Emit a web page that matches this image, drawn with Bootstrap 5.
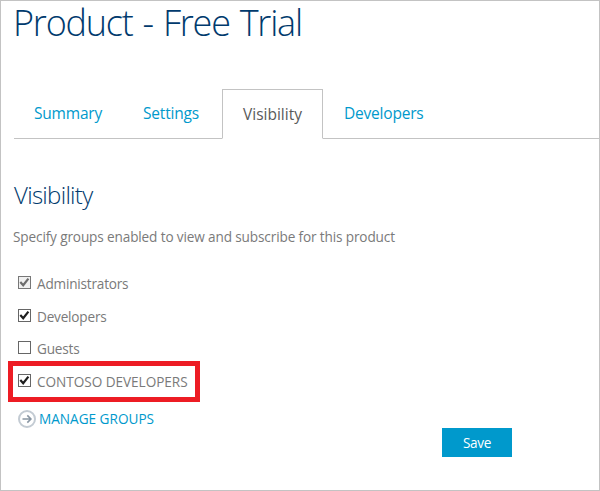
<!DOCTYPE html>
<html lang="en">
<head>
<meta charset="utf-8">
<meta name="viewport" content="width=device-width, initial-scale=1">
<title>Product - Free Trial</title>
<link href="https://cdn.jsdelivr.net/npm/bootstrap@5.3.0/dist/css/bootstrap.min.css" rel="stylesheet">
<style>
body{font-family:"Open Sans","Noto Sans",sans-serif;font-size:13.6px;color:#7a7a7a;background:#fff}
.frame{height:491px;border:1px solid #c3c3c3;white-space:nowrap}
.page-title{font-size:36px;font-weight:300;color:#003a6d;line-height:44px;height:44px;margin-left:12px;letter-spacing:-1.2px;word-spacing:1.8px}
.tabs{margin:44px 0 0 13px;height:50px;--bs-nav-tabs-border-width:1px;--bs-nav-tabs-border-color:#c3c3c3;--bs-nav-tabs-border-radius:0;--bs-nav-link-padding-x:20px;--bs-nav-link-padding-y:0;--bs-nav-link-color:#0099cc;--bs-nav-tabs-link-active-color:#5a5a5a;--bs-nav-tabs-link-active-border-color:#c3c3c3 #c3c3c3 #fff}
.tabs .nav-link{font-size:15.5px;height:50px;line-height:47px;padding-left:19px;padding-right:0;letter-spacing:-.2px}
.tabs .nav-link.active{line-height:49px;padding-left:20px;letter-spacing:0}
.tabs .last-tab{padding-left:20px}
.section-title{font-size:24px;font-weight:300;color:#003a6d;line-height:32px;margin:40px 0 0 13px;letter-spacing:-.7px}
.intro{line-height:20px;margin:16px 0 0 12px;letter-spacing:-.135px}
.group-row{height:20px;margin-left:17px;letter-spacing:-.2px}
.group-row svg{width:13px;height:13px;margin:0 6px 1px 0;flex:none}
.group-row span{line-height:20px;position:relative;top:1px}
.marked{width:192px;height:41px;border:5px solid #ed1c24;margin:3px 0 0 7px}
.marked .group-row{margin:5px 0 0 5px;letter-spacing:-.04px}
.manage{color:#0099cc;line-height:20px;margin:7px 0 0 17px}
.manage svg{margin-right:3px;flex:none}
.btn-save{width:70px;height:29px;background:#0099cc!important;color:#fff!important;font-size:13.6px;line-height:29px;margin:-1px 0 0 441px;letter-spacing:-.3px}
</style>
</head>
<body>
<svg class="d-none"><defs>
<symbol id="box" viewBox="0 0 13 13"><rect x=".5" y=".5" width="12" height="12" fill="#fff" stroke="#666"/></symbol>
<symbol id="boxon" viewBox="0 0 13 13"><rect x=".5" y=".5" width="12" height="12" fill="#fff" stroke="#666"/><path d="M2.3 6 5.2 9.2 10.4 2.6" fill="none" stroke="#1e1e1e" stroke-width="2.2"/></symbol>
<symbol id="boxoff" viewBox="0 0 13 13"><rect x=".5" y=".5" width="12" height="12" fill="#f0f0f0" stroke="#777"/><path d="M2.3 6 5.2 9.2 10.4 2.6" fill="none" stroke="#6d6d6d" stroke-width="2.2"/></symbol>
</defs></svg>
<main class="frame">
<h1 class="page-title mb-0">Product - Free Trial</h1>
<ul class="nav nav-tabs tabs flex-nowrap">
<li class="nav-item" style="width:109px"><a class="nav-link" href="#">Summary</a></li>
<li class="nav-item" style="width:99px"><a class="nav-link" href="#">Settings</a></li>
<li class="nav-item" style="width:101px"><a class="nav-link active" href="#">Visibility</a></li>
<li class="nav-item"><a class="nav-link last-tab" href="#">Developers</a></li>
</ul>
<h2 class="section-title mb-0">Visibility</h2>
<p class="intro mb-0">Specify groups enabled to view and subscribe for this product</p>
<div class="group-row d-flex align-items-center" style="margin-top:26px"><svg><use href="#boxoff"/></svg><span>Administrators</span></div>
<div class="group-row d-flex align-items-center" style="margin-top:13px"><svg><use href="#boxon"/></svg><span>Developers</span></div>
<div class="group-row d-flex align-items-center" style="margin-top:12px"><svg><use href="#box"/></svg><span>Guests</span></div>
<div class="marked"><div class="group-row d-flex align-items-center"><svg><use href="#boxon"/></svg><span>CONTOSO DEVELOPERS</span></div></div>
<a class="manage d-flex align-items-center text-decoration-none" href="#"><svg width="18" height="18" viewBox="0 0 18 18" fill="none"><circle cx="9" cy="9" r="8" stroke="#c3cbd3" stroke-width="2"/><path d="M4.5 9h8M9.3 5.4 12.9 9l-3.6 3.6" stroke="#8996a3" stroke-width="1.6"/></svg><span>MANAGE GROUPS</span></a>
<button class="btn btn-save rounded-0 border-0 p-0 d-block">Save</button>
</main>
<script src="https://cdn.jsdelivr.net/npm/bootstrap@5.3.0/dist/js/bootstrap.bundle.min.js"></script>
</body>
</html>
